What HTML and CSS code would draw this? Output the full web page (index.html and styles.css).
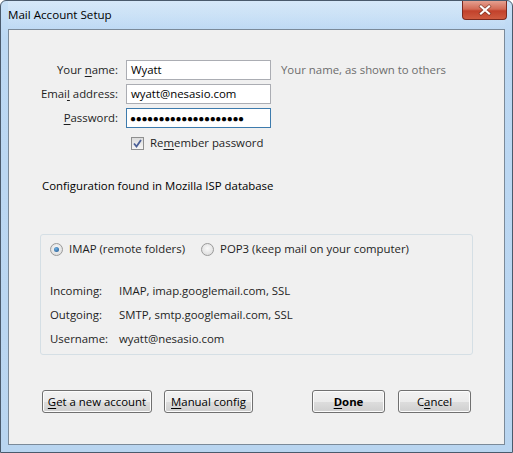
FILE: index.html
```html
<!DOCTYPE html>
<html>
<head>
<meta charset="utf-8">
<link rel="stylesheet" href="styles.css">
</head>
<body>
<div class="window">
  <div class="titlebar">
    <span class="title">Mail Account Setup</span>
    <div class="close"><svg width="16" height="12" viewBox="0 0 16 12"><path d="M4 2.5 L12 9.5 M12 2.5 L4 9.5" stroke="#5a2418" stroke-width="3.6" stroke-linecap="square" fill="none" opacity="0.6"/><path d="M4 2.5 L12 9.5 M12 2.5 L4 9.5" stroke="#fff" stroke-width="2.2" stroke-linecap="square" fill="none"/></svg></div>
  </div>
  <div class="client">
    <div class="form">
      <label class="lbl">Your <u>n</u>ame:</label>
      <div class="input">Wyatt</div>
      <span class="hint">Your name, as shown to others</span>
      <label class="lbl">Emai<u>l</u> address:</label>
      <div class="input">wyatt@nesasio.com</div>
      <span></span>
      <label class="lbl"><u>P</u>assword:</label>
      <div class="input focus dots">●●●●●●●●●●●●●●●●●●●●</div>
      <span></span>
      <span></span>
      <div class="check-row">
        <span class="checkbox"><svg width="9" height="9" viewBox="0 0 9 9"><path d="M1 4.5 L3.5 7.5 L8 1" stroke="#4a5f97" stroke-width="1.8" fill="none"/></svg></span>
        <span>Re<u>m</u>ember password</span>
      </div>
    </div>
    <p class="status">Configuration found in Mozilla ISP database</p>
    <div class="group">
      <div class="radios">
        <span class="radio on"><span class="dot"></span></span><span class="rlabel">IMAP (remote folders)</span>
        <span class="radio"></span><span class="rlabel">POP3 (keep mail on your computer)</span>
      </div>
      <div class="details">
        <span>Incoming:</span><span>IMAP, imap.googlemail.com, SSL</span>
        <span>Outgoing:</span><span>SMTP, smtp.googlemail.com, SSL</span>
        <span>Username:</span><span>wyatt@nesasio.com</span>
      </div>
    </div>
    <div class="buttons">
      <button class="btn w110"><u>G</u>et a new account</button>
      <button class="btn w89"><u>M</u>anual config</button>
      <span class="spacer"></span>
      <button class="btn w73 bold"><u>D</u>one</button>
      <button class="btn w73">C<u>a</u>ncel</button>
    </div>
  </div>
</div>
</body>
</html>
```

FILE: styles.css
```css
html, body {
  margin: 0;
  padding: 0;
  width: 513px;
  height: 453px;
  overflow: hidden;
  background: #fff;
}
body {
  font-family: "Open Sans", "Noto Sans", sans-serif;
  font-size: 11.4px;
  line-height: 16px;
  color: #1e1e1e;
}
u { text-decoration: underline; text-underline-offset: 2px; }
.window {
  box-sizing: border-box;
  width: 513px;
  height: 453px;
  border: 1px solid #4a5a6c;
  border-radius: 6px 6px 0 0;
  background: linear-gradient(180deg, #c9e1f7 0%, #bcd8f3 8%, #b9d5f0 100%);
  display: flex;
  flex-direction: column;
  padding: 0 7px 7px 7px;
  position: relative;
}
.titlebar {
  height: 28px;
  display: flex;
  align-items: flex-start;
  background: linear-gradient(180deg, rgba(255,255,255,0.25), rgba(255,255,255,0));
}
.title {
  padding-top: 6px;
  font-size: 11.6px;
  color: #000;
}
.close {
  margin-left: auto;
  margin-right: -2px;
  width: 45px;
  height: 19px;
  box-sizing: border-box;
  border: 1px solid #7a2a20;
  border-top: none;
  border-radius: 0 0 4px 4px;
  background: linear-gradient(180deg, #e5a090 0%, #d36a55 45%, #c2412b 55%, #cf5b40 100%);
  display: flex;
  align-items: center;
  justify-content: center;
}
.client {
  flex: 1;
  background: #f0f0f0;
  border: 1px solid #7b8a99;
  display: flex;
  flex-direction: column;
  padding: 0 33px 0 33px;
}
.form {
  display: grid;
  grid-template-columns: 76px 145px auto;
  column-gap: 8px;
  row-gap: 4px;
  margin-top: 30px;
  align-items: center;
}
.lbl {
  text-align: right;
  white-space: nowrap;
  margin-left: -20px;
}
.input {
  box-sizing: border-box;
  height: 20px;
  background: #fff;
  border: 1px solid #abadb3;
  padding: 0 4px;
  line-height: 18px;
  color: #000;
}
.input.focus { border-color: #3d7bad; }
.dots { font-size: 10px; letter-spacing: -0.35px; padding-left: 3px; white-space: nowrap; overflow: hidden; color: #000; }
.hint {
  color: #6d6d6d;
  padding-left: 2px;
  white-space: nowrap;
}
.check-row {
  grid-column: 2 / span 2;
  display: flex;
  align-items: center;
  gap: 6px;
  padding-left: 5px;
  margin-top: 3px;
}
.checkbox {
  width: 11px;
  height: 11px;
  border: 1px solid #8e8f8f;
  background: linear-gradient(180deg, #dcdcdc, #f6f6f6);
  display: flex;
  align-items: center;
  justify-content: center;
}
.status {
  margin: 27px 0 0 0;
  color: #000;
}
.group {
  margin-top: 40px;
  margin-left: -2px;
  margin-right: -2px;
  height: 121px;
  box-sizing: border-box;
  border: 1px solid #d5dfe5;
  border-radius: 3px;
  padding: 4px 8px 0 9px;
}
.radios {
  display: flex;
  align-items: center;
  height: 20px;
}
.radio {
  width: 11px;
  height: 11px;
  border-radius: 50%;
  border: 1px solid #9a9a9a;
  background: radial-gradient(circle at 50% 40%, #fafafa, #d6d6d6);
  display: flex;
  align-items: center;
  justify-content: center;
  margin-right: 6px;
}
.radio .dot {
  width: 5px;
  height: 5px;
  border-radius: 50%;
  background: radial-gradient(circle at 40% 35%, #6fb2e5, #1b4f86);
}
.rlabel { margin-right: 16px; }
.details {
  display: grid;
  grid-template-columns: 69px auto;
  row-gap: 8px;
  margin-top: 24px;
  color: #1e1e1e;
}
.buttons {
  display: flex;
  margin-top: 35px;
  gap: 12px;
}
.spacer { flex: 1; }
.btn {
  font-family: inherit;
  font-size: 11.4px;
  color: #000;
  height: 23px;
  box-sizing: border-box;
  border: 1px solid #707070;
  border-radius: 3px;
  background: linear-gradient(180deg, #f2f2f2 0%, #ebebeb 50%, #dddddd 51%, #cfcfcf 100%);
  padding: 0;
  box-shadow: inset 0 0 0 1px #fcfcfc;
}
.w110 { width: 110px; }
.w89 { width: 89px; }
.w73 { width: 73px; }
.bold { font-weight: bold; margin-right: 1px; }
```
